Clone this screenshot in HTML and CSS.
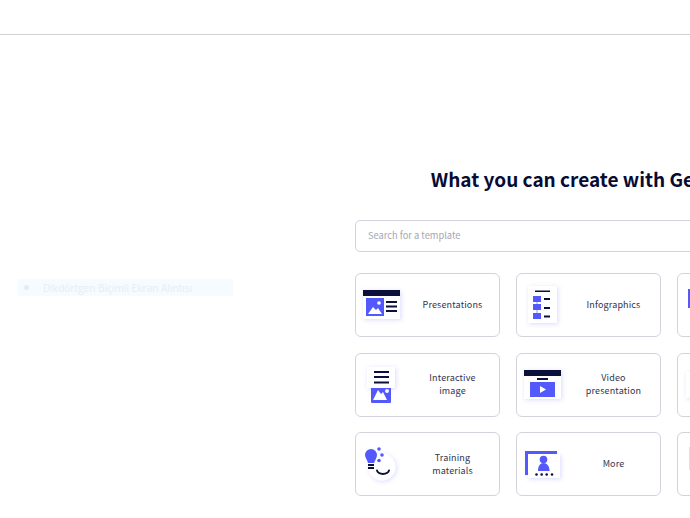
FILE: index.html
```html
<!DOCTYPE html>
<html lang="en">
<head>
  <meta charset="UTF-8">
  <meta name="viewport" content="width=device-width, initial-scale=1.0">
  <title>What you can create with Genially</title>
  <link rel="stylesheet" href="styles.css">
</head>
<body>
  <svg class="svg-defs" width="0" height="0">
    <defs>
      <filter id="soft" x="-30%" y="-30%" width="160%" height="160%">
        <feDropShadow dx="1" dy="1" stdDeviation="2" flood-color="#5359fb" flood-opacity="0.22"/>
      </filter>
    </defs>
  </svg>
  <header class="top-bar"></header>
  <main class="page">
    <aside class="side">
      <div class="snip-tag">
        <span class="snip-dot"></span>
        <span class="snip-text">Dikdörtgen Biçimli Ekran Alıntısı</span>
      </div>
    </aside>
    <section class="create">
      <h1 class="create-title">What you can create with Genially</h1>
      <div class="search-box">Search for a template</div>
      <div class="card-grid">
        <a class="card">
          <span class="card-icon">
            <svg width="46" height="46" viewBox="0 0 46 46">
              <rect x="2" y="8" width="37" height="29" fill="#fff" filter="url(#soft)"/>
              <rect x="2" y="8" width="37" height="6" fill="#0a1039"/>
              <rect x="5" y="16" width="18" height="18" fill="#5359fb"/>
              <path d="M7 32l5-7 3 3 2-2 4 6z" fill="#fff"/>
              <circle cx="18" cy="21" r="1.800" fill="#fff"/>
              <path d="M25 19h11v2H25zM25 23.500h11v2H25zM25 28h11v2H25z" fill="#0a1039"/>
            </svg>
          </span>
          <span class="card-label">Presentations</span>
        </a>
        <a class="card">
          <span class="card-icon">
            <svg width="46" height="46" viewBox="0 0 46 46">
              <rect x="6" y="4" width="29" height="37" fill="#fff" filter="url(#soft)"/>
              <rect x="13" y="8.500" width="15" height="1.500" fill="#0a1039"/>
              <path d="M11 14h8v6h-8zM11 22h8v6h-8zM11 31h8v6h-8z" fill="#5359fb"/>
              <path d="M14.700 20h.6v2h-.6zM14.700 28h.6v3h-.6z" fill="#5359fb"/>
              <path d="M22 16h6v2h-6zM22 25h6v2h-6zM22 33.500h6v2h-6z" fill="#0a1039"/>
            </svg>
          </span>
          <span class="card-label">Infographics</span>
        </a>
        <a class="card">
          <span class="card-icon">
            <svg width="46" height="46" viewBox="0 0 46 46">
              <rect x="5" y="7" width="20" height="19" fill="#5359fb"/>
            </svg>
          </span>
        </a>
        <a class="card">
          <span class="card-icon">
            <svg width="46" height="46" viewBox="0 0 46 46">
              <rect x="10" y="22" width="20" height="19" rx="1" fill="#5359fb"/>
              <path d="M12 38l5-10 3 4 2-2 4 8z" fill="#fff"/>
              <circle cx="26" cy="29" r="2" fill="#fff"/>
              <rect x="6" y="5" width="28" height="21" fill="#fff" filter="url(#soft)"/>
              <path d="M13 9h15v2H13zM13 14h15v2H13zM13 19.500h15v2H13z" fill="#0a1039"/>
            </svg>
          </span>
          <span class="card-label">Interactive<br>image</span>
        </a>
        <a class="card">
          <span class="card-icon">
            <svg width="46" height="46" viewBox="0 0 46 46">
              <rect x="2" y="8" width="37" height="29" fill="#fff" filter="url(#soft)"/>
              <rect x="2" y="8" width="37" height="6" fill="#0a1039"/>
              <rect x="15" y="16" width="11" height="2" fill="#0a1039"/>
              <rect x="8" y="20" width="25" height="15" fill="#5359fb"/>
              <path d="M18 24l6 3.500-6 3.500z" fill="#fff"/>
            </svg>
          </span>
          <span class="card-label">Video<br>presentation</span>
        </a>
        <a class="card">
          <span class="card-icon">
            <svg width="46" height="46" viewBox="0 0 46 46">
              <rect x="3" y="10" width="30" height="26" fill="#fff" filter="url(#soft)"/>
            </svg>
          </span>
        </a>
        <a class="card">
          <span class="card-icon">
            <svg width="46" height="46" viewBox="0 0 46 46">
              <circle cx="21" cy="26" r="13.500" fill="#fff" filter="url(#soft)"/>
              <path d="M10 8a6 6 0 0 1 6 6c0 3-2 5-3 8H7c-.5-3-3-5-3-8a6 6 0 0 1 6-6z" fill="#5359fb"/>
              <path d="M7 23h6v2H7zM7 26h6v2H7z" fill="#0a1039"/>
              <circle cx="18" cy="8" r="1.800" fill="#5359fb"/>
              <circle cx="21" cy="14" r="1.800" fill="#5359fb"/>
              <circle cx="18" cy="19.500" r="1.800" fill="#5359fb"/>
              <path d="M16 29.500c1.500 4.500 10.500 4.500 12 0" fill="none" stroke="#0a1039" stroke-width="2" stroke-linecap="round"/>
            </svg>
          </span>
          <span class="card-label">Training<br>materials</span>
        </a>
        <a class="card">
          <span class="card-icon">
            <svg width="46" height="46" viewBox="0 0 46 46">
              <rect x="6" y="13" width="32" height="24" fill="#fff" filter="url(#soft)"/>
              <path d="M4.500 34V11.500H35" fill="none" stroke="#5359fb" stroke-width="3"/>
              <circle cx="21.500" cy="18.500" r="3.800" fill="#5359fb"/>
              <path d="M16 30c0-5 2-8 5.500-8s6 3 6 8z" fill="#5359fb"/>
              <circle cx="14.500" cy="33.500" r="1.300" fill="#0a1039"/>
              <circle cx="19.700" cy="33.500" r="1.300" fill="#0a1039"/>
              <circle cx="24.700" cy="33.500" r="1.300" fill="#0a1039"/>
              <circle cx="30" cy="33.500" r="1.300" fill="#0a1039"/>
            </svg>
          </span>
          <span class="card-label">More</span>
        </a>
        <a class="card">
          <span class="card-icon">
            <svg width="46" height="46" viewBox="0 0 46 46">
              <rect x="6" y="6" width="20" height="23" fill="#dcdcfb"/>
            </svg>
          </span>
        </a>
      </div>
    </section>
  </main>
</body>
</html>
```

FILE: styles.css
```css
html, body {
  height: 100%;
}
body {
  font-family: 'Noto Sans CJK SC', 'Noto Sans', sans-serif;
  background-color: #fff;
  color: #0a1039;
  margin: 0;
  overflow: hidden;
}
.svg-defs {
  display: block;
  height: 0;
}
.top-bar {
  height: 34px;
  border-bottom: 1px solid #d2d2d6;
}
.page {
  display: flex;
}
.side {
  flex: 0 0 355px;
  padding: 244px 0 0 18px;
  box-sizing: border-box;
}
.snip-tag {
  display: flex;
  align-items: center;
  width: 215px;
  height: 17px;
  background: #f5fbff;
  font-family: 'Open Sans', sans-serif;
  font-size: 10.100px;
  color: #e9edf2;
  white-space: nowrap;
}
.snip-dot {
  width: 5px;
  height: 5px;
  margin: 0 14px 0 6px;
  border-radius: 50%;
  background: #e6ecf3;
}
.create {
  flex: 0 0 467px;
  padding-top: 130px;
}
.create-title {
  margin: 0 0 25px;
  height: 30px;
  line-height: 28px;
  font-size: 19px;
  font-weight: 700;
  text-align: center;
  white-space: nowrap;
  color: #060c33;
}
.search-box {
  height: 30px;
  line-height: 29px;
  padding: 0 12px;
  border: 1px solid #d3d3dc;
  border-radius: 5px;
  font-size: 9.300px;
  color: #a5a7b4;
}
.card-grid {
  display: grid;
  grid-template-columns: repeat(3, 145px);
  grid-auto-rows: 64px;
  column-gap: 16px;
  row-gap: 15.500px;
  margin-top: 21px;
}
.card {
  display: flex;
  align-items: center;
  box-sizing: border-box;
  padding: 0 5px;
  border: 1px solid #d3d3dc;
  border-radius: 6px;
  background: #fff;
}
.card-icon {
  flex: 0 0 46px;
  height: 46px;
}
.card-label {
  flex: 1;
  padding: 0 0 1px 4px;
  font-size: 9px;
  line-height: 13px;
  letter-spacing: 0.15px;
  text-align: center;
  color: #2f3450;
}
```
